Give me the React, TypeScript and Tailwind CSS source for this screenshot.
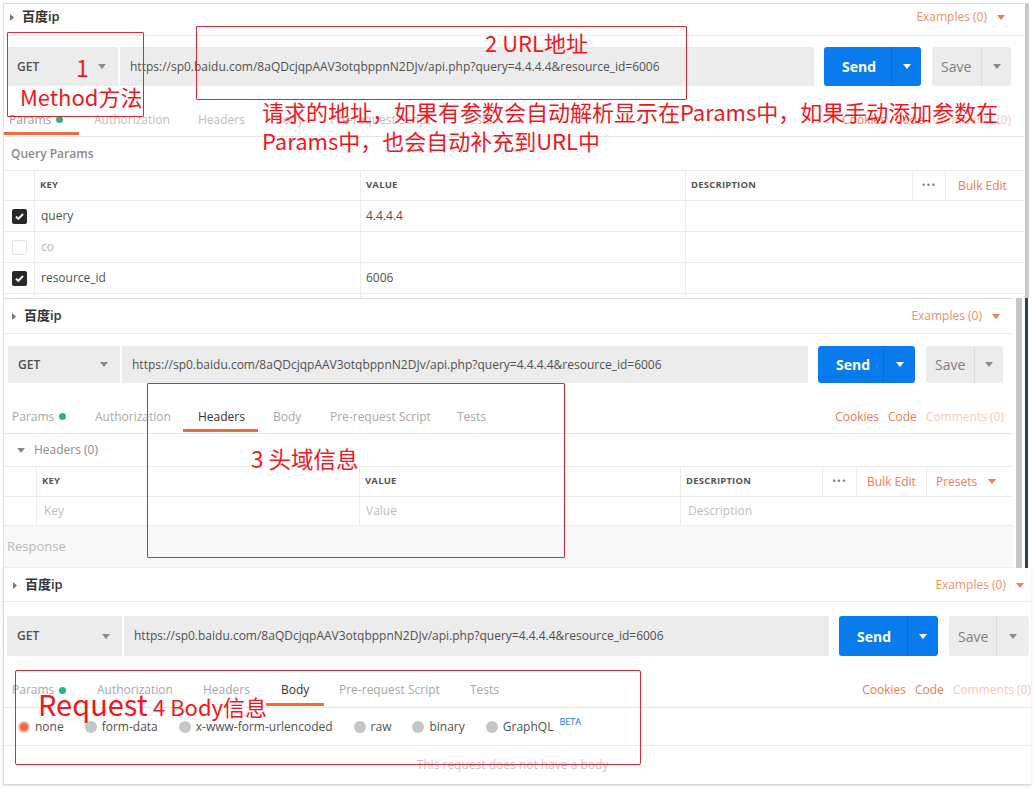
import React from "react";

function Caret({ className = "" }: { className?: string }) {
  return (
    <svg width="8" height="5" viewBox="0 0 8 5" className={className}>
      <path d="M0 0h8L4 5z" fill="currentColor" />
    </svg>
  );
}

function RightTri() {
  return (
    <svg width="4" height="7" viewBox="0 0 4 7" className="text-[#777]">
      <path d="M0 0l4 3.5L0 7z" fill="currentColor" />
    </svg>
  );
}

function Check() {
  return (
    <span className="w-[15px] h-[15px] rounded-[2px] bg-[#282828] flex items-center justify-center">
      <svg width="11" height="11" viewBox="0 0 11 11">
        <path d="M2 5.6l2.3 2.3L9 3" stroke="#fff" strokeWidth="2" fill="none" />
      </svg>
    </span>
  );
}

function Header({ cls, pl, pr }: { cls: string; pl: string; pr: string }) {
  return (
    <div className={`shrink-0 flex items-center justify-between border-b border-[#ececec] ${cls} ${pl} ${pr}`}>
      <div className="flex items-center gap-[8px]">
        <RightTri />
        <span className="text-[13px] font-semibold text-[#333] font-['Open_Sans','Noto_Sans_CJK_SC',sans-serif]">百度ip</span>
      </div>
      <div className="flex items-center gap-[10px] text-[12px] text-[#f0906c]">
        <span>Examples (0)</span>
        <Caret className="text-[#f07b55]" />
      </div>
    </div>
  );
}

function UrlRow({
  cls,
  getW,
  urlW,
  sendW,
  sendMain,
  saveW,
  saveMain,
}: {
  cls: string;
  getW: string;
  urlW: string;
  sendW: string;
  sendMain: string;
  saveW: string;
  saveMain: string;
}) {
  return (
    <div className={`shrink-0 flex items-stretch ${cls}`}>
      <div className={`${getW} bg-[#ececec] flex items-center justify-between pl-[10px] pr-[12px] rounded-l-[2px]`}>
        <span className="text-[12px] font-semibold text-[#505050]">GET</span>
        <Caret className="text-[#8a8a8a]" />
      </div>
      <div className={`${urlW} ml-[2px] bg-[#ececec] flex items-center pl-[10px] text-[12px] text-[#505050] whitespace-nowrap overflow-hidden`}>
        https://sp0.baidu.com/8aQDcjqpAAV3otqbppnN2DJv/api.php?query=4.4.4.4&amp;resource_id=6006
      </div>
      <div className={`${sendW} ml-[10px] bg-[#097bed] rounded-[3px] flex items-stretch`}>
        <div className={`${sendMain} flex items-center pl-[18px] text-[14px] font-bold text-white border-r border-[#0a6bd0]`}>Send</div>
        <div className="flex-1 flex items-center justify-center">
          <Caret className="text-white" />
        </div>
      </div>
      <div className={`${saveW} ml-[11px] bg-[#ececec] rounded-[3px] flex items-stretch`}>
        <div className={`${saveMain} flex items-center pl-[9px] text-[14px] text-[#808080] border-r border-[#dadada]`}>Save</div>
        <div className="flex-1 flex items-center justify-center">
          <Caret className="text-[#8a8a8a]" />
        </div>
      </div>
    </div>
  );
}

function TabRow({
  cls,
  tabs,
  active,
  rightCls,
  inactiveCls,
  activeCls,
}: {
  cls: string;
  tabs: [string, string, string][];
  active: number;
  rightCls: string;
  inactiveCls: string;
  activeCls: string;
}) {
  return (
    <div className={`shrink-0 flex items-stretch justify-between border-b border-[#e6e6e6] ${cls}`}>
      <div className="flex items-stretch">
        {tabs.map(([label, w, pl], i) => (
          <div
            key={label}
            className={`relative flex items-center whitespace-nowrap text-[12px] ${w} ${pl} ${i === active ? activeCls : inactiveCls}`}
          >
            <span>{label}</span>
            {label === "Params" && <span className="ml-[5px] w-[7px] h-[7px] rounded-full bg-[#26b47f]" />}
            {i === active && <span className="absolute left-0 right-0 bottom-[1px] h-[3px] bg-[#f26b3a]" />}
          </div>
        ))}
      </div>
      <div className={`flex items-center gap-[9px] text-[12px] whitespace-nowrap ${rightCls}`}>
        <span className="text-[#f07b55]">Cookies</span>
        <span className="text-[#f07b55]">Code</span>
        <span className="text-[#f8c8b6]">Comments (0)</span>
      </div>
    </div>
  );
}

function Radio({ on, label, beta }: { on?: boolean; label: string; beta?: boolean }) {
  return (
    <div className="flex items-center gap-[5px]">
      {on ? (
        <span className="w-[12px] h-[12px] rounded-full bg-[#f7c0ab] flex items-center justify-center">
          <span className="w-[8px] h-[8px] rounded-full bg-[#f06a45]" />
        </span>
      ) : (
        <span className="w-[12px] h-[12px] rounded-full bg-[#c6c6c6]" />
      )}
      <span className="text-[12px] text-[#505050]">{label}</span>
      {beta && <span className="text-[9px] text-[#097bed] -mt-[10px] ml-[1px]">BETA</span>}
    </div>
  );
}

const red = "text-[#f2161c] font-['Noto_Sans_CJK_SC',sans-serif] leading-none whitespace-nowrap";

export default function App() {
  const th = "text-[9.5px] font-bold text-[#555] tracking-[0.2px]";
  return (
    <div className="relative w-[1033px] h-[790px] overflow-hidden bg-white font-['Open_Sans',sans-serif]">
      {/* Panel 1 */}
      <div className="flex h-[298px] pt-[3px] pl-[3px]">
        <div className="w-[1021px] flex flex-col border-l border-t border-[#dedede] overflow-hidden">
          <Header cls="h-[32px] pb-[5px]" pl="pl-[6px]" pr="pr-[19px]" />
          <UrlRow
            cls="mt-[11px] h-[39px] pl-[3px]"
            getW="w-[111px]"
            urlW="w-[694px]"
            sendW="w-[97px]"
            sendMain="w-[68px]"
            saveW="w-[79px]"
            saveMain="w-[50px]"
          />
          <TabRow
            cls="mt-[17px] h-[34px]"
            tabs={[
              ["Params", "w-[75px]", "pl-[5px]"],
              ["Authorization", "w-[104px]", "pl-[15px]"],
              ["Headers", "w-[77px]", "pl-[15px]"],
              ["Body", "w-[55px]", "pl-[15px]"],
              ["Pre-request Script", "w-[133px]", "pl-[15px]"],
              ["Tests", "w-[60px]", "pl-[15px]"],
            ]}
            active={0}
            rightCls="pr-[13px]"
            inactiveCls="text-[#bdbdbd]"
            activeCls="text-[#9a9a9a]"
          />
          <div className="h-[33px] shrink-0 flex items-center pl-[7px] text-[12px] font-semibold text-[#8a8a8a]">Query Params</div>
          <div className="flex flex-col border-t border-[#ececec]">
            <div className="h-[30px] flex border-b border-[#ececec]">
              <div className="w-[31px] border-r border-[#ececec]" />
              <div className={`w-[326px] border-r border-[#ececec] flex items-center pl-[5px] ${th}`}>KEY</div>
              <div className={`w-[325px] border-r border-[#ececec] flex items-center pl-[5px] ${th}`}>VALUE</div>
              <div className={`w-[226px] flex items-center pl-[5px] ${th}`}>DESCRIPTION</div>
              <div className="w-[34px] border-x border-[#f0f0f0] flex items-center justify-center text-[10px] text-[#777] tracking-[1px]">•••</div>
              <div className="flex-1 flex items-center pl-[12px] text-[12px] text-[#f07b55]">Bulk Edit</div>
            </div>
            {[
              ["query", "4.4.4.4", true],
              ["co", "", false],
              ["resource_id", "6006", true],
              ["", "", null],
            ].map(([k, v, c], i) => (
              <div key={i} className="h-[31px] shrink-0 flex border-b border-[#ececec]">
                <div className="w-[31px] border-r border-[#ececec] flex items-center justify-center">
                  {c === true && <Check />}
                  {c === false && <span className="w-[15px] h-[15px] rounded-[2px] border border-[#e3e3e3]" />}
                </div>
                <div className={`w-[326px] border-r border-[#ececec] flex items-center pl-[6px] text-[12px] ${c === false ? "text-[#b5b5b5]" : "text-[#505050]"}`}>{k as string}</div>
                <div className="w-[325px] border-r border-[#ececec] flex items-center pl-[5px] text-[12px] text-[#505050]">{v as string}</div>
                <div className="flex-1" />
              </div>
            ))}
          </div>
        </div>
        <div className="ml-[1px] w-[4px] bg-[#c9c9c9]" />
      </div>

      {/* Panel 2 */}
      <div className="flex h-[270px] pl-[3px]">
        <div className="w-[1010px] flex flex-col border-l border-t border-[#dedede] overflow-hidden">
          <Header cls="h-[35px]" pl="pl-[8px]" pr="pr-[13px]" />
          <UrlRow
            cls="mt-[12px] h-[37px] pl-[4px]"
            getW="w-[112px]"
            urlW="w-[686px]"
            sendW="w-[97px]"
            sendMain="w-[66px]"
            saveW="w-[77px]"
            saveMain="w-[49px]"
          />
          <TabRow
            cls="mt-[17px] h-[34px]"
            tabs={[
              ["Params", "w-[76px]", "pl-[8px]"],
              ["Authorization", "w-[103px]", "pl-[15px]"],
              ["Headers", "w-[75px]", "pl-[15px]"],
              ["Body", "w-[57px]", "pl-[15px]"],
              ["Pre-request Script", "w-[127px]", "pl-[15px]"],
              ["Tests", "w-[60px]", "pl-[15px]"],
            ]}
            active={2}
            rightCls="pr-[9px]"
            inactiveCls="text-[#a8a8a8]"
            activeCls="text-[#333]"
          />
          <div className="h-[32px] shrink-0 flex items-center pl-[13px] gap-[9px] text-[12px] text-[#8a8a8a]">
            <Caret className="text-[#8a8a8a]" />
            <span>Headers (0)</span>
          </div>
          <div className="flex flex-col border-t border-[#ececec]">
            <div className="h-[30px] flex border-b border-[#ececec]">
              <div className="w-[33px] border-r border-[#ececec]" />
              <div className={`w-[323px] border-r border-[#ececec] flex items-center pl-[5px] ${th}`}>KEY</div>
              <div className={`w-[321px] border-r border-[#ececec] flex items-center pl-[5px] ${th}`}>VALUE</div>
              <div className={`w-[141px] flex items-center pl-[5px] ${th}`}>DESCRIPTION</div>
              <div className="w-[35px] border-x border-[#f0f0f0] flex items-center justify-center text-[10px] text-[#777] tracking-[1px]">•••</div>
              <div className="w-[70px] border-r border-[#f0f0f0] flex items-center pl-[10px] text-[12px] text-[#f07b55]">Bulk Edit</div>
              <div className="flex-1 flex items-center pl-[9px] gap-[11px] text-[12px] text-[#f07b55]">
                <span>Presets</span>
                <Caret className="text-[#f07b55]" />
              </div>
            </div>
            <div className="h-[29px] flex border-b border-[#ececec]">
              <div className="w-[33px] border-r border-[#ececec]" />
              <div className="w-[323px] border-r border-[#ececec] flex items-center pl-[7px] text-[12px] text-[#bdbdbd]">Key</div>
              <div className="w-[321px] border-r border-[#ececec] flex items-center pl-[6px] text-[12px] text-[#bdbdbd]">Value</div>
              <div className="flex-1 flex items-center pl-[7px] text-[12px] text-[#bdbdbd]">Description</div>
            </div>
          </div>
          <div className="flex-1 bg-[#f8f8f8] border-b border-[#ececec] flex items-start pt-[11px] pl-[3px] text-[13px] text-[#b8b8b8]">Response</div>
        </div>
        <div className="ml-[3px] w-[6px] bg-[#c6c6c6]" />
        <div className="ml-[3px] w-[3px] bg-[#2e3d58]" />
      </div>

      {/* Panel 3 */}
      <div className="h-[217px] pl-[3px]">
        <div className="w-[1028px] h-full flex flex-col border-l border-b border-[#d9d9d9] shadow-[0_1px_3px_rgba(0,0,0,0.12)] overflow-hidden">
          <Header cls="h-[34px] pt-[1px]" pl="pl-[9px]" pr="pr-[7px]" />
          <UrlRow
            cls="mt-[14px] h-[40px] pl-[3px]"
            getW="w-[115px]"
            urlW="w-[705px]"
            sendW="w-[99px]"
            sendMain="w-[69px]"
            saveW="w-[80px]"
            saveMain="w-[48px]"
          />
          <TabRow
            cls="mt-[17px] h-[35px]"
            tabs={[
              ["Params", "w-[78px]", "pl-[8px]"],
              ["Authorization", "w-[106px]", "pl-[15px]"],
              ["Headers", "w-[78px]", "pl-[15px]"],
              ["Body", "w-[58px]", "pl-[15px]"],
              ["Pre-request Script", "w-[131px]", "pl-[15px]"],
              ["Tests", "w-[60px]", "pl-[15px]"],
            ]}
            active={3}
            rightCls="pr-[0px]"
            inactiveCls="text-[#a8a8a8]"
            activeCls="text-[#333]"
          />
          <div className="h-[38px] shrink-0 flex items-center pl-[14px] gap-[21px] border-b border-[#ececec]">
            <Radio on label="none" />
            <Radio label="form-data" />
            <Radio label="x-www-form-urlencoded" />
            <Radio label="raw" />
            <Radio label="binary" />
            <Radio label="GraphQL" beta />
          </div>
          <div className="flex-1 flex items-center justify-center pr-[10px] text-[12px] text-[#c4c4c4]">This request does not have a body</div>
        </div>
      </div>

      {/* Annotations */}
      <div className="absolute left-[7px] top-[32px] w-[137px] h-[85px] border border-[#dc2a34] rounded-[1px]" />
      <div className={`absolute left-[76px] top-[56px] text-[23px] ${red}`}>1</div>
      <div className={`absolute left-[20px] top-[85px] text-[22px] ${red}`}>Method方法</div>

      <div className="absolute left-[196px] top-[26px] w-[491px] h-[74px] border border-[#dc2a34] rounded-[1px]" />
      <div className={`absolute left-[485px] top-[31px] text-[22px] ${red}`}>2 URL地址</div>
      <div className={`absolute left-[262px] top-[100px] text-[22px] ${red}`}>请求的地址，如果有参数会自动解析显示在Params中，如果手动添加参数在</div>
      <div className={`absolute left-[262px] top-[129px] text-[22px] ${red}`}>Params中，也会自动补充到URL中</div>

      <div className="absolute left-[147px] top-[383px] w-[418px] h-[175px] border border-[#dc2a34] rounded-[1px]" />
      <div className={`absolute left-[251px] top-[447px] text-[22.5px] ${red}`}>3 头域信息</div>

      <div className="absolute left-[15px] top-[670px] w-[626px] h-[95px] border border-[#dc2a34] rounded-[2px]" />
      <div className={`absolute left-[38px] top-[689px] text-[29px] ${red}`}>Request</div>
      <div className={`absolute left-[153px] top-[695px] text-[22px] ${red}`}>4 Body信息</div>
    </div>
  );
}
